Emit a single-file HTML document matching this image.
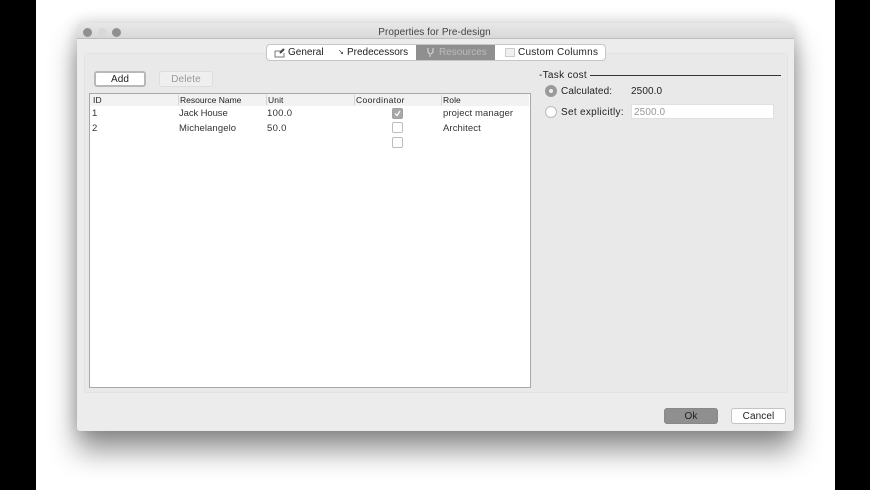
<!DOCTYPE html>
<html><head><meta charset="utf-8"><style>
html,body{margin:0;padding:0;width:870px;height:490px;overflow:hidden;background:#000}
*{box-sizing:border-box}
#bg{position:absolute;left:36px;top:0;width:799px;height:490px;background:#fff;overflow:hidden}
#win{position:absolute;left:41px;top:23px;width:717px;height:408px;background:#ececec;border-radius:5px 5px 3px 3px;box-shadow:0 20px 28px rgba(0,0,0,.42),0 0 16px rgba(0,0,0,.2);font:9.5px "Liberation Sans",sans-serif;color:#222;overflow:hidden;letter-spacing:.1px}
.a{position:absolute;white-space:nowrap}
#tb{left:0;top:0;width:717px;height:16px;background:linear-gradient(#e8e8e8,#d8d8d8);border-bottom:1px solid #bdbdbd}
.dot{position:absolute;top:5px;width:9px;height:9px;border-radius:50%;background:#909090}
#panel{left:7px;top:30px;width:704px;height:340px;background:#e9e9e9;border:1px solid #e2e2e2;border-radius:3px}
#tabs{left:189px;top:21px;width:340px;height:17px;background:#fff;border:1px solid #c6c6c6;border-radius:4px;overflow:hidden}
.btn{position:absolute;background:#fff;border:1px solid #c4c4c4;border-radius:3px;text-align:center}
#tbl{left:12px;top:70px;width:441.5px;height:295px;background:#fff;border:1px solid #a8a8a8}
#hd{left:0;top:0;width:439px;height:12px;background:#f2f2f2}
.sep{position:absolute;top:1px;width:1px;height:10px;background:#d4d4d4}
.cb{position:absolute;width:11px;height:11px;border:1px solid #bdbdbd;border-radius:2px;background:#fff}
.t{font-size:9.5px;color:#333}
</style></head><body>
<div id="bg">
<div id="win">
 <div id="tb" class="a">
  <div class="dot" style="left:6px"></div><div class="dot" style="left:21px;background:#d8d8d8"></div><div class="dot" style="left:35px"></div>
  <div class="a" style="left:-1px;width:717px;top:4px;text-align:center;font-size:10px;color:#444;letter-spacing:.05px">Properties for Pre-design</div>
 </div>
 <div id="panel" class="a"></div>
 <div id="tabs" class="a">
  <div class="a" style="left:149px;top:0;width:79px;height:15px;background:#8f8f8f"></div>
  <svg class="a" style="left:7px;top:2px" width="12" height="11"><path d="M1 4h7M1 4v6h9V6" fill="none" stroke="#777"/><path d="M6 6l4-4" stroke="#444" stroke-width="2"/></svg>
  <div class="a" style="left:21px;top:2px;font-size:10px;letter-spacing:0">General</div>
  <div class="a" style="left:71px;top:3px;font-size:7px">↘</div>
  <div class="a" style="left:80px;top:2px;font-size:10px;letter-spacing:0">Predecessors</div>
  <svg class="a" style="left:159px;top:2px" width="9" height="11"><path d="M2 1v4l2 2v3M7 1v4L5 7" fill="none" stroke="#ddd"/></svg>
  <div class="a" style="left:172px;top:2px;font-size:10px;color:#bbb;letter-spacing:0">Resources</div>
  <div class="a" style="left:238px;top:3px;width:10px;height:9px;background:#f0f0f0;border:1px solid #ccc"></div>
  <div class="a" style="left:251px;top:2px;font-size:10px;letter-spacing:.25px">Custom Columns</div>
 </div>
 <div class="btn" style="left:17px;top:48px;width:52px;height:16px;border:2px solid #b8b8b8;line-height:14px;font-size:10px">Add</div>
 <div class="btn" style="left:82px;top:48px;width:54px;height:16px;background:#efefef;border-color:#ddd;line-height:16px;font-size:10px;color:#999">Delete</div>
 <div id="tbl" class="a">
  <div id="hd" class="a"></div>
  <div class="sep" style="left:88px"></div><div class="sep" style="left:176px"></div><div class="sep" style="left:264px"></div><div class="sep" style="left:351px"></div>
  <div class="a" style="left:3px;top:1px;font-size:8.5px">ID</div>
  <div class="a" style="left:90px;top:1px;font-size:8.5px;letter-spacing:0">Resource Name</div>
  <div class="a" style="left:178px;top:1px;font-size:8.5px">Unit</div>
  <div class="a" style="left:266px;top:1px;font-size:8.5px;letter-spacing:.4px">Coordinator</div>
  <div class="a" style="left:353px;top:1px;font-size:8.5px">Role</div>
  <div class="a t" style="left:2px;top:14px;">1</div><div class="a t" style="left:89px;top:14px;letter-spacing:-.1px">Jack House</div><div class="a t" style="left:177px;top:14px;letter-spacing:.3px">100.0</div><div class="a t" style="left:353px;top:14px">project manager</div>
  <div class="a t" style="left:2px;top:29px">2</div><div class="a t" style="left:89px;top:29px">Michelangelo</div><div class="a t" style="left:177px;top:29px;letter-spacing:.3px">50.0</div><div class="a t" style="left:353px;top:29px">Architect</div>
  <div class="cb" style="left:302px;top:14px;background:#a8a8a8;border-color:#a0a0a0"><svg width="9" height="9" style="display:block"><path d="M2 4.5l2 2 3-4.5" fill="none" stroke="#fff" stroke-width="1.2"/></svg></div>
  <div class="cb" style="left:302px;top:28px"></div>
  <div class="cb" style="left:302px;top:43px"></div>
 </div>
 <div class="a" style="left:462px;top:47px;font-size:10px;letter-spacing:.3px">-Task cost</div>
 <div class="a" style="left:513px;top:52px;width:191px;height:1px;background:#333"></div>
 <div class="a" style="left:468px;top:62px;width:12px;height:12px;border-radius:50%;background:#9a9a9a"><div class="a" style="left:4px;top:4px;width:4px;height:4px;border-radius:50%;background:#eee"></div></div>
 <div class="a" style="left:484px;top:63px;font-size:10px;letter-spacing:.1px">Calculated:</div>
 <div class="a" style="left:554px;top:63px;font-size:10px">2500.0</div>
 <div class="a" style="left:468px;top:83px;width:12px;height:12px;border-radius:50%;background:#fff;border:1px solid #bbb"></div>
 <div class="a" style="left:484px;top:84px;font-size:10px;letter-spacing:.3px">Set explicitly:</div>
 <div class="a" style="left:554px;top:81px;width:143px;height:15px;background:#fff;border:1px solid #e0e0e0;padding-left:2px;line-height:15px;font-size:10px;color:#999">2500.0</div>
 <div class="btn" style="left:587px;top:385px;width:54px;height:16px;background:#8f8f8f;border-color:#888;line-height:16px;font-size:10px">Ok</div>
 <div class="btn" style="left:654px;top:385px;width:55px;height:16px;line-height:16px;font-size:10px">Cancel</div>
</div>
</div>
</body></html>
